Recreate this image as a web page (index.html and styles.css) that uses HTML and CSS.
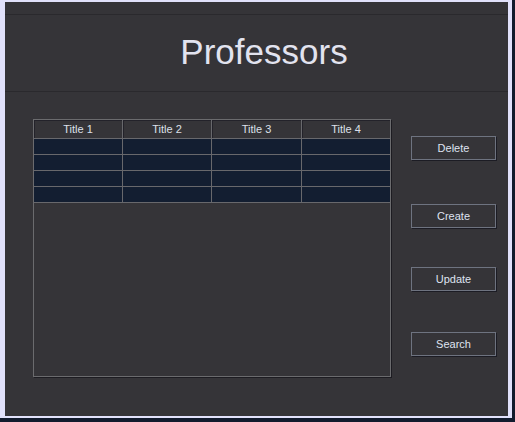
FILE: index.html
```html
<!DOCTYPE html>
<html>
<head>
<meta charset="utf-8">
<link rel="stylesheet" href="styles.css">
</head>
<body>
<div class="frame">
  <div class="window">
    <div class="topband"></div>
    <header class="header"><h1 class="title">Professors</h1></header>
    <main class="main">
      <div class="table">
        <div class="cell head">Title 1</div>
        <div class="cell head">Title 2</div>
        <div class="cell head">Title 3</div>
        <div class="cell head last">Title 4</div>
        <div class="cell row"></div><div class="cell row"></div><div class="cell row"></div><div class="cell row last"></div>
        <div class="cell row"></div><div class="cell row"></div><div class="cell row"></div><div class="cell row last"></div>
        <div class="cell row"></div><div class="cell row"></div><div class="cell row"></div><div class="cell row last"></div>
        <div class="cell row"></div><div class="cell row"></div><div class="cell row"></div><div class="cell row last"></div>
      </div>
      <div class="buttons">
        <button class="btn btn-delete">Delete</button>
        <button class="btn btn-create">Create</button>
        <button class="btn btn-update">Update</button>
        <button class="btn btn-search">Search</button>
      </div>
    </main>
  </div>
</div>
</body>
</html>
```
FILE: styles.css
```css
html, body {
  margin: 0;
  padding: 0;
  background: #121b2d;
  width: 515px;
  height: 422px;
  overflow: hidden;
}
.frame {
  width: 512px;
  height: 418px;
  box-sizing: border-box;
  background: #e1e1fb;
  padding: 2px 4px 2px 5px;
}
.window {
  width: 503px;
  height: 414px;
  background: #353438;
  display: flex;
  flex-direction: column;
  font-family: "Liberation Sans", Arial, sans-serif;
}
.topband {
  height: 12px;
  border-bottom: 1px solid #2a292d;
  flex: none;
}
.header {
  height: 76px;
  border-bottom: 1px solid #2a292d;
  display: flex;
  align-items: center;
  justify-content: center;
  flex: none;
}
.title {
  margin: -3px 0 0 0;
  font-weight: normal;
  font-size: 35px;
  color: #e2e3ef;
  padding-left: 15px;
}
.main {
  display: flex;
  padding: 27px 0 0 28px;
}
.table {
  width: 358px;
  height: 258px;
  box-sizing: border-box;
  border: 1px solid #6b6b6e;
  box-shadow: 1px 1px 0 #1d1c22;
  display: grid;
  grid-template-columns: 89px 89px 90px 88px;
  grid-template-rows: 19px 16px 16px 16px 16px;
  align-content: start;
}
.cell {
  box-sizing: border-box;
  border-right: 1px solid #68686c;
  border-bottom: 1px solid #68686c;
}
.cell.last {
  border-right: none;
}
.head {
  background: #353438;
  color: #dde0ea;
  font-size: 11px;
  line-height: 19px;
  text-align: center;
  box-shadow: inset 1px 1px 0 #23222a;
}
.row {
  background: #131e31;
}
.buttons {
  display: flex;
  flex-direction: column;
  margin-left: 20px;
  padding-top: 17px;
}
.btn {
  width: 85px;
  height: 24px;
  box-sizing: border-box;
  background: #353438;
  border: 1px solid #6e7380;
  box-shadow: 1px 1px 0 #1c1c24;
  color: #dfe3f0;
  font-family: "Liberation Sans", Arial, sans-serif;
  font-size: 11px;
  padding: 0;
  margin: 0;
}
.btn-create { margin-top: 44px; }
.btn-update { margin-top: 39px; }
.btn-search { margin-top: 41px; }
```
